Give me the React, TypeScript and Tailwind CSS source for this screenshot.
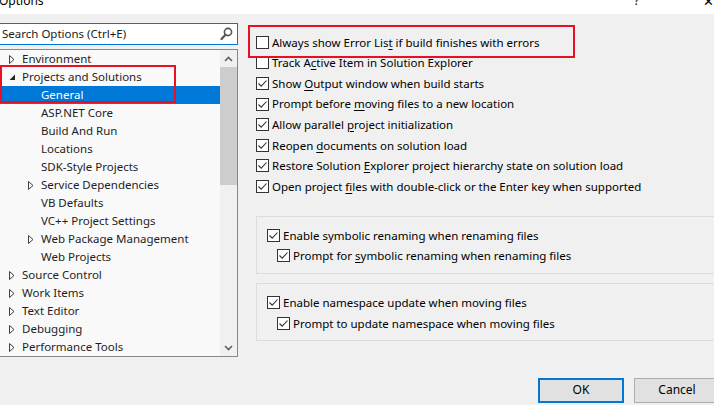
import React from "react";

const font = { fontFamily: '"Noto Sans", "Segoe UI", sans-serif' };

function Collapsed() {
  return (
    <svg width="6" height="9" viewBox="0 0 6 9" className="shrink-0">
      <path d="M0.5 0.5 L5 4.5 L0.5 8.5 Z" fill="none" stroke="#404040" strokeWidth="1" />
    </svg>
  );
}
function Expanded() {
  return (
    <svg width="7" height="7" viewBox="0 0 7 7" className="shrink-0">
      <path d="M6 0.5 L6 6 L0.5 6 Z" fill="#262626" />
    </svg>
  );
}

type Node = { label: string; level: number; arrow?: "c" | "e"; selected?: boolean };
const tree: Node[] = [
  { label: "Environment", level: 1, arrow: "c" },
  { label: "Projects and Solutions", level: 1, arrow: "e" },
  { label: "General", level: 2, selected: true },
  { label: "ASP.NET Core", level: 2 },
  { label: "Build And Run", level: 2 },
  { label: "Locations", level: 2 },
  { label: "SDK-Style Projects", level: 2 },
  { label: "Service Dependencies", level: 2, arrow: "c" },
  { label: "VB Defaults", level: 2 },
  { label: "VC++ Project Settings", level: 2 },
  { label: "Web Package Management", level: 2, arrow: "c" },
  { label: "Web Projects", level: 2 },
  { label: "Source Control", level: 1, arrow: "c" },
  { label: "Work Items", level: 1, arrow: "c" },
  { label: "Text Editor", level: 1, arrow: "c" },
  { label: "Debugging", level: 1, arrow: "c" },
  { label: "Performance Tools", level: 1, arrow: "c" },
];

function CheckBox({ checked }: { checked: boolean }) {
  return (
    <span className="w-[13px] h-[13px] border border-[#333333] bg-white shrink-0 flex items-center justify-center">
      {checked && (
        <svg width="11" height="11" viewBox="0 0 11 11">
          <path d="M1.5 5.5 L4.2 8.2 L9.5 2.5" fill="none" stroke="#333333" strokeWidth="1.1" />
        </svg>
      )}
    </span>
  );
}

function Label({ pre, u, post }: { pre: string; u?: string; post?: string }) {
  return (
    <span className="whitespace-nowrap">
      {pre}
      {u && <span className="underline underline-offset-2">{u}</span>}
      {post}
    </span>
  );
}

const opts: { pre: string; u?: string; post?: string; checked: boolean }[] = [
  { pre: "Always show Error Lis", u: "t", post: " if build finishes with errors", checked: false },
  { pre: "Track A", u: "c", post: "tive Item in Solution Explorer", checked: false },
  { pre: "Show ", u: "O", post: "utput window when build starts", checked: true },
  { pre: "Prompt before ", u: "m", post: "oving files to a new location", checked: true },
  { pre: "Allow parallel ", u: "p", post: "roject initialization", checked: true },
  { pre: "Reopen ", u: "d", post: "ocuments on solution load", checked: true },
  { pre: "Restore Solution ", u: "E", post: "xplorer project hierarchy state on solution load", checked: true },
  { pre: "Open project ", u: "f", post: "iles with double-click or the Enter key when supported", checked: true },
];

export default function App() {
  return (
    <div className="w-[714px] h-[405px] bg-[#f0f0f0] relative overflow-hidden text-[11.5px] text-black" style={font}>
      {/* title bar */}
      <div className="h-[14px] bg-white relative overflow-hidden">
        <span className="absolute left-[-1px] top-[-7px] text-[12px] leading-[16px] text-black">Options</span>
        <span className="absolute left-[634px] top-[-7px] text-[12px] leading-[16px] text-black">?</span>
        <span className="absolute left-[703px] top-[-7px] text-[13px] leading-[16px] text-black">✕</span>
      </div>

      <div className="flex">
        {/* left column */}
        <div className="w-[239px] shrink-0 ml-[-1px] flex flex-col">
          <div className="mt-[9px] h-[22px] border border-[#0078d7] bg-white flex items-center justify-between pl-[2px] pr-[4px]">
            <span className="text-[#1a1a1a] text-[11.5px]">Search Options (Ctrl+E)</span>
            <svg width="13" height="14" viewBox="0 0 13 14">
              <circle cx="8" cy="5" r="3.6" fill="none" stroke="#555" strokeWidth="1.6" />
              <path d="M5.5 7.8 L1.5 12" stroke="#555" strokeWidth="2.2" strokeLinecap="round" />
            </svg>
          </div>
          <div className="mt-[4px] h-[308px] border border-[#828790] bg-[#f9f9f9] flex relative">
            <div className="flex-1 flex flex-col">
              {tree.map((n) => (
                <div
                  key={n.label}
                  className={
                    "h-[18px] flex items-center " +
                    (n.selected ? "bg-[#0078d7] text-white" : "text-[#1e1e1e]")
                  }
                >
                  <span className={n.level === 1 ? "w-[22px] pl-[9px] flex items-center shrink-0" : "w-[41px] pl-[28px] flex items-center shrink-0"}>
                    {n.arrow === "c" && <Collapsed />}
                    {n.arrow === "e" && <Expanded />}
                  </span>
                  <span className="whitespace-nowrap">{n.label}</span>
                </div>
              ))}
            </div>
            {/* scrollbar */}
            <div className="w-[17px] shrink-0 bg-[#f0f0f0] flex flex-col items-center">
              <div className="h-[17px] flex items-center justify-center">
                <svg width="9" height="6" viewBox="0 0 9 6">
                  <path d="M1 5 L4.5 1.5 L8 5" fill="none" stroke="#606060" strokeWidth="1.6" />
                </svg>
              </div>
              <div className="w-[17px] h-[118px] bg-[#cdcdcd]" />
              <div className="flex-1" />
              <div className="h-[17px] flex items-center justify-center">
                <svg width="9" height="6" viewBox="0 0 9 6">
                  <path d="M1 1 L4.5 4.5 L8 1" fill="none" stroke="#606060" strokeWidth="1.6" />
                </svg>
              </div>
            </div>
          </div>
        </div>

        {/* right column */}
        <div className="ml-[18px] flex-1 min-w-0 flex flex-col">
          <div className="mt-[18px] flex flex-col">
            {opts.map((o, i) => (
              <div key={i} className="h-[20.6px] flex items-center gap-[3px]">
                <CheckBox checked={o.checked} />
                <Label pre={o.pre} u={o.u} post={o.post} />
              </div>
            ))}
          </div>

          <div className="mt-[19px] h-[58px] border border-[#dcdcdc] border-r-0 pl-[10px] pt-[9px] flex flex-col">
            <div className="h-[20px] flex items-center gap-[3px]">
              <CheckBox checked />
              <span className="whitespace-nowrap">Enable symbolic renaming when renaming files</span>
            </div>
            <div className="h-[19px] flex items-center gap-[3px] pl-[10px]">
              <CheckBox checked />
              <Label pre="Prompt for " u="s" post="ymbolic renaming when renaming files" />
            </div>
          </div>

          <div className="mt-[9px] h-[58px] border border-[#dcdcdc] border-r-0 pl-[10px] pt-[8px] flex flex-col">
            <div className="h-[21px] flex items-center gap-[3px]">
              <CheckBox checked />
              <span className="whitespace-nowrap">Enable namespace update when moving files</span>
            </div>
            <div className="h-[21px] flex items-center gap-[3px] pl-[10px]">
              <CheckBox checked />
              <span className="whitespace-nowrap">Prompt to update namespace when moving files</span>
            </div>
          </div>

          <div className="mt-[37px] flex gap-[10px] pl-[282px]">
            <button className="w-[86px] h-[25px] shrink-0 border-2 border-[#0078d7] bg-[#e1e1e1] text-black text-[12px]">OK</button>
            <button className="w-[86px] h-[25px] shrink-0 border border-[#adadad] bg-[#e1e1e1] text-black text-[12px]">Cancel</button>
          </div>
        </div>
      </div>

      {/* highlight boxes */}
      <div className="absolute left-[0px] top-[65px] w-[176px] h-[38px] border-2 border-[#e81123]" />
      <div className="absolute left-[248px] top-[25px] w-[327px] h-[33px] border-2 border-[#e81123]" />
    </div>
  );
}
